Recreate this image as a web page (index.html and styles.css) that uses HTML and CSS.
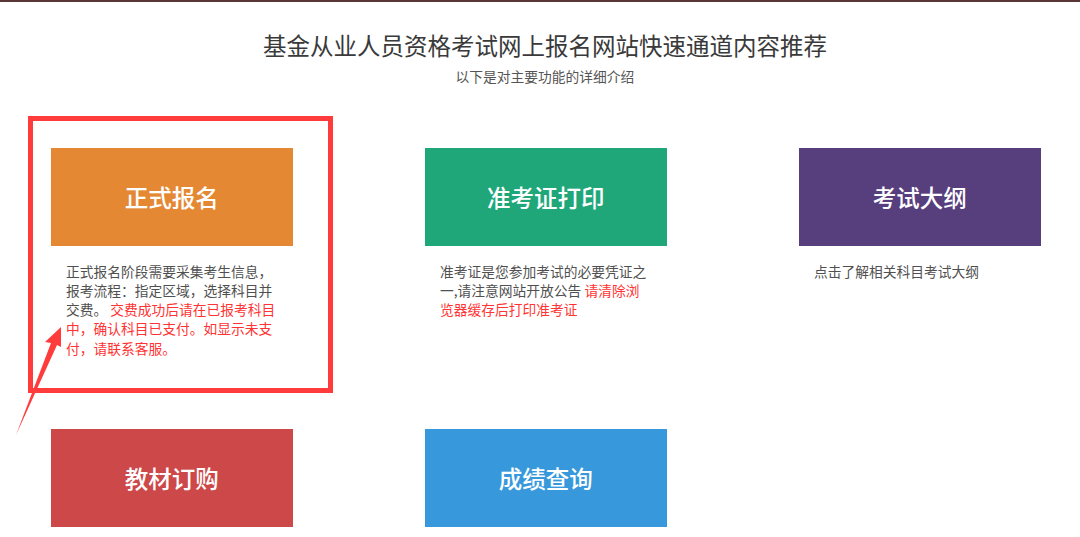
FILE: index.html
```html
<!DOCTYPE html>
<html lang="zh-CN">
<head>
<meta charset="utf-8">
<title>基金从业人员资格考试网上报名网站快速通道内容推荐</title>
<link rel="stylesheet" href="styles.css">
</head>
<body>
<div class="topbar"></div>
<div class="page">
  <h1 class="title">基金从业人员资格考试网上报名网站快速通道内容推荐</h1>
  <p class="subtitle">以下是对主要功能的详细介绍</p>
  <div class="grid">
    <div class="card">
      <div class="btn orange">正式报名</div>
      <p class="desc">正式报名阶段需要采集考生信息，报考流程：指定区域，选择科目并交费。 <span class="warn">交费成功后请在已报考科目中，确认科目已支付。如显示未支付，请联系客服。</span></p>
    </div>
    <div class="card">
      <div class="btn green">准考证打印</div>
      <p class="desc">准考证是您参加考试的必要凭证之一,请注意网站开放公告 <span class="warn">请清除浏览器缓存后打印准考证</span></p>
    </div>
    <div class="card">
      <div class="btn purple">考试大纲</div>
      <p class="desc">点击了解相关科目考试大纲</p>
    </div>
    <div class="card">
      <div class="btn red">教材订购</div>
    </div>
    <div class="card">
      <div class="btn blue">成绩查询</div>
    </div>
  </div>
</div>
<div class="annot-box"></div>
<svg class="annot-arrow" width="80" height="150" viewBox="0 0 80 150" aria-hidden="true">
  <polygon points="61,27 45,42 51,43 16,135 57,45 61,47" fill="#ff3b3b"/>
</svg>
</body>
</html>
```

FILE: styles.css
```css
html, body {
  margin: 0;
  padding: 0;
  background: #ffffff;
  overflow: hidden;
}

body {
  font-family: "Noto Sans CJK SC", "Noto Sans", sans-serif;
  color: #555555;
  position: relative;
  height: 537px;
}

.topbar {
  height: 2px;
  background: #5a3535;
}

.page {
  width: 1090px;
}

.title {
  margin: 27px 0 0;
  font-size: 23.5px;
  line-height: 32px;
  font-weight: 400;
  color: #3a3a3a;
  text-align: center;
}

.subtitle {
  margin: 5px 0 0;
  font-size: 13.75px;
  line-height: 20px;
  color: #555555;
  text-align: center;
}

.grid {
  display: grid;
  grid-template-columns: repeat(3, 241.5px);
  grid-template-rows: 250px 97.5px;
  column-gap: 132.5px;
  row-gap: 31px;
  padding-left: 51px;
  margin-top: 62px;
}

.btn {
  height: 97.5px;
  display: flex;
  align-items: center;
  justify-content: center;
  color: #ffffff;
  font-size: 23.5px;
  font-weight: 500;
}

.orange { background: #e48834; }
.green  { background: #1fa77a; }
.purple { background: #573e7d; }
.red    { background: #cd4849; }
.blue   { background: #3798db; }

.desc {
  margin: 16px 0 0;
  padding: 0 15.5px 0 15px;
  font-size: 13.75px;
  line-height: 19.3px;
  color: #505050;
}

.warn {
  color: #ff3333;
}

.annot-box {
  position: absolute;
  left: 28px;
  top: 116px;
  width: 305px;
  height: 277px;
  border: 5px solid #ff3b3b;
  box-sizing: border-box;
}

.annot-arrow {
  position: absolute;
  left: 0;
  top: 300px;
}
```
